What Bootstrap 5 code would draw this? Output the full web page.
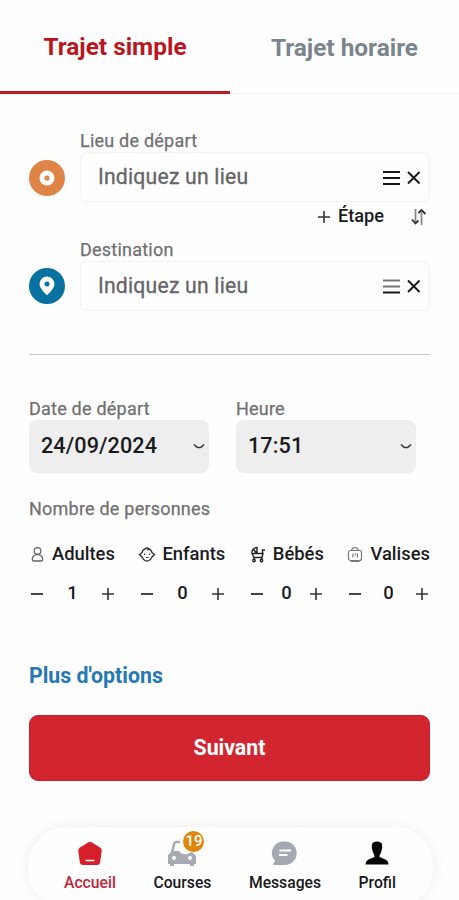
<!DOCTYPE html>
<html lang="fr">
<head>
<meta charset="utf-8">
<meta name="viewport" content="width=device-width, initial-scale=1">
<title>Réservation de trajet</title>
<link href="https://cdn.jsdelivr.net/npm/bootstrap@5.3.0/dist/css/bootstrap.min.css" rel="stylesheet">
<style>
body{font-family:Roboto,"Liberation Sans",sans-serif;font-weight:500;background:#fefefe;color:#1b1b1d;line-height:1}
.screen{width:459px;height:900px}
.tabs{height:94px}
.tab-item{border:0;background:none;font-size:24.4px;font-weight:700;padding:3px 0 0;white-space:nowrap}
.tab-on{width:230px;color:#b9161e;border-bottom:3px solid #bd1a22}
.tab-off{width:229px;color:#7b858d;border-bottom:1px solid #f3f3f4}
.content-area{padding:0 29px}
.lbl{font-size:18px;line-height:20px;color:#707072;font-weight:400;letter-spacing:.22px;-webkit-text-stroke:.25px;white-space:nowrap;margin-bottom:1px}
.place-box{height:50px;border:1px solid #f1f1f1;border-radius:7px;padding:0 7px 0 17px;font-size:21.2px;letter-spacing:.2px;color:#656567;font-weight:400;-webkit-text-stroke:.3px}
.place-row{gap:15px}
.place-from{margin-top:37px}
.place-to{margin-top:9px}
.place-from .pin{margin-bottom:2px}
.place-to .pin{margin-bottom:3px}
.step-row{height:29px;font-size:18.2px;padding-right:2px}
.rule{height:1px;background:#c9c9c9;margin-top:43px}
.pick{width:180px}
.pick-box{height:53px;background:#eee;border-radius:8px;padding:0 4px 1px 12px;font-size:21.6px;letter-spacing:.1px}
.pick-gap{gap:27px;margin-top:44px}
.people{margin-top:26px}
.kinds{font-size:18.4px;height:20px;margin-top:24px}
.kind{white-space:nowrap;gap:6px}
.kind-narrow{gap:7px}
.count{font-size:18.4px;height:20px;margin-top:19px;padding:0 2px}
.count-wide{width:83px}
.count-small{width:71px}
.count-last{width:79px}
.more{color:#2378b5;font-size:21.3px;font-weight:700;text-decoration:none;margin-top:61px;line-height:24px}
.next{height:66px;margin-top:27px;background:#d2252f;border:1px solid #c91f2a;border-radius:9px;color:#fff;font-size:21.3px;font-weight:700;padding:0}
.dock{margin:46px 26px 0 28px;height:80px;border-radius:38px;background:#fefefe;box-shadow:0 0 14px rgba(0,0,0,.07);font-size:15.7px;padding:0 37px 0 36px}
.dock-link{position:relative;color:#18181a;text-decoration:none;padding-top:12px}
.dock-link svg{height:28px;margin-bottom:8px}
.dock-on{color:#c41f35}
.count-dot{position:absolute;left:30px;top:4px;width:21px;height:21px;border-radius:50%;background:#e1860b;color:#fff;font-size:15px}
</style>
<script src="https://cdn.jsdelivr.net/npm/bootstrap@5.3.0/dist/js/bootstrap.bundle.min.js"></script>
</head>
<body>
<svg class="d-none">
  <symbol id="minus" viewBox="0 0 12 12"><path d="M0 6.500h12" stroke="#222" stroke-width="1.700"/></symbol>
  <symbol id="plus" viewBox="0 0 12 12"><path d="M0 6.500h12M6 .5v12" stroke="#333" stroke-width="1.600"/></symbol>
  <symbol id="chevron" viewBox="0 0 12 8"><path d="M1 2.500l2.500 2.300q2.500 1.500 5 0L11 2.500" fill="none" stroke="#333" stroke-width="1.500"/></symbol>
</svg>
<div class="screen d-flex flex-column overflow-hidden">
  <nav class="tabs d-flex flex-shrink-0">
    <button class="tab-item tab-on">Trajet simple</button>
    <button class="tab-item tab-off">Trajet horaire</button>
  </nav>
  <main class="content-area d-flex flex-column">
    <div class="place-row place-from d-flex align-items-end">
      <svg class="pin flex-shrink-0" width="36" height="40" viewBox="0 0 36 40"><circle cx="18" cy="18" r="18" fill="#dd8446"/><circle cx="18" cy="18" r="7.500" fill="#fff"/><circle cx="18" cy="18" r="2.600" fill="#dd8446"/></svg>
      <div class="flex-grow-1">
        <div class="lbl">Lieu de départ</div>
        <div class="place-box d-flex align-items-center"><span class="me-auto">Indiquez un lieu</span>
          <svg width="40" height="20" viewBox="0 0 40 20" fill="none" stroke="#161618" stroke-width="1.900"><path d="M1 5h17M1 11h17M1 17h17M26 5l11.500 11.500M37.500 5L26 16.500"/></svg></div>
      </div>
    </div>
    <div class="step-row d-flex align-items-center justify-content-end">
      <svg class="me-2" width="12" height="13"><use href="#plus"/></svg>
      <span>Étape</span>
      <svg class="ms-4" width="20" height="18" viewBox="0 0 20 18" fill="none" stroke-width="1.800"><path d="M7.500 1v13M13.500 4v13" stroke="#8a8a8c"/><path d="M4 11.500l3.500 4 3-3M10.500 5l3-3 4 4" stroke="#333"/></svg>
    </div>
    <div class="place-row place-to d-flex align-items-end">
      <svg class="pin flex-shrink-0" width="36" height="40" viewBox="0 0 36 40"><circle cx="18" cy="18" r="18" fill="#07719f"/><path fill="#fff" fill-rule="evenodd" d="M18 27.500c-1.500-2-7.500-7-7.500-11.500a7.500 7.500 0 0 1 15 0c0 4.500-6 9.500-7.500 11.500zM18 13.500a2.500 2.500 0 1 0 0 5 2.500 2.500 0 0 0 0-5z"/></svg>
      <div class="flex-grow-1">
        <div class="lbl">Destination</div>
        <div class="place-box d-flex align-items-center"><span class="me-auto">Indiquez un lieu</span>
          <svg width="40" height="20" viewBox="0 0 40 20" fill="none" stroke="#161618" stroke-width="1.900"><path stroke="#777" d="M1 4.500h17M1 10.500h17"/><path d="M1 16.500h17M26 4.500L37.500 16M37.500 4.500L26 16"/></svg></div>
      </div>
    </div>
    <div class="rule"></div>
    <div class="pick-gap d-flex">
      <div class="pick"><div class="lbl">Date de départ</div>
        <div class="pick-box d-flex align-items-center justify-content-between"><span>24/09/2024</span><svg width="12" height="8"><use href="#chevron"/></svg></div></div>
      <div class="pick"><div class="lbl">Heure</div>
        <div class="pick-box d-flex align-items-center justify-content-between"><span>17:51</span><svg width="12" height="8"><use href="#chevron"/></svg></div></div>
    </div>
    <div class="lbl people">Nombre de personnes</div>
    <div class="kinds d-flex justify-content-between">
      <div class="kind kind-narrow d-flex align-items-center"><svg width="16" height="18" viewBox="0 0 16 18" fill="none" stroke="#666" stroke-width="1.300"><circle cx="8.500" cy="6" r="3.300"/><path d="M6 10Q3.300 11.500 3.300 14.500q0 1.500 1.500 1.500h7.400q1.500 0 1.500-1.500 0-3-2.700-4.500-2.500-1-5 0z"/></svg>Adultes</div>
      <div class="kind d-flex align-items-center"><svg width="18" height="18" viewBox="0 0 18 18" fill="none" stroke="#333" stroke-width="1.400"><path d="M1.500 9.500l2.500-2Q5 4 9 3q4 1 5 4.500l2.500 2-2.500 2.500Q12 16 9 16t-5-4zM9 3q2 1 .5 2.500"/><path stroke-width="1.200" d="M6.500 8.500v1.500M11.500 8.500v1.500M8 12.500h2.500"/></svg>Enfants</div>
      <div class="kind d-flex align-items-center"><svg width="18" height="18" viewBox="0 0 18 18" fill="none" stroke="#222" stroke-width="1.400"><path d="M3 8.500Q2.500 3 8 2.500v6h5.500V5H16M3 8.500l2 4h8l1-4H3M8 8.500L4.500 4.500M5.500 12.500l-1 2M12.500 12.500l.5 2"/><circle cx="5" cy="15.500" r="1.200"/><circle cx="12.500" cy="15.500" r="1.200"/></svg>Bébés</div>
      <div class="kind kind-narrow d-flex align-items-center"><svg width="16" height="18" viewBox="0 0 16 18" fill="none" stroke="#777" stroke-width="1.200"><rect x="1.500" y="5.500" width="13" height="10" rx="2"/><path d="M4.500 5.500Q5 2.500 8 2.500t3.500 3M6 8.500v4M8.500 8.500v2M10.500 8.500v4M3.500 16.500h9"/></svg>Valises</div>
    </div>
    <div class="count d-flex justify-content-between">
      <div class="count-wide d-flex align-items-center justify-content-between"><svg width="12" height="13"><use href="#minus"/></svg>1<svg width="12" height="13"><use href="#plus"/></svg></div>
      <div class="count-wide d-flex align-items-center justify-content-between"><svg width="12" height="13"><use href="#minus"/></svg>0<svg width="12" height="13"><use href="#plus"/></svg></div>
      <div class="count-small d-flex align-items-center justify-content-between"><svg width="12" height="13"><use href="#minus"/></svg>0<svg width="12" height="13"><use href="#plus"/></svg></div>
      <div class="count-last d-flex align-items-center justify-content-between"><svg width="12" height="13"><use href="#minus"/></svg>0<svg width="12" height="13"><use href="#plus"/></svg></div>
    </div>
    <a class="more" href="#">Plus d'options</a>
    <button class="next">Suivant</button>
  </main>
  <footer class="dock d-flex flex-shrink-0 justify-content-between">
    <a class="dock-link dock-on d-flex flex-column align-items-center" href="#"><svg width="28" viewBox="0 0 28 28"><path fill="#d51f2a" d="M12 3.500q2-1.300 4 0l8 5q2 1.300 1.700 3.500l-1.500 11q-.4 3-3.200 3H7q-2.800 0-3.200-3L2.300 12Q2 9.800 4 8.500z"/><path stroke="#fff" stroke-width="1.500" d="M9.500 21.500h9"/></svg>Accueil</a>
    <a class="dock-link d-flex flex-column align-items-center" href="#"><svg width="30" viewBox="0 0 30 28"><path fill="none" stroke="#a7aab2" stroke-width="2.500" d="M5 14l2-9q.5-2 3-2H13"/><path fill="#a7aab2" fill-rule="evenodd" d="M1 16l4-4h7q3 4 8 3l5-2 4 4v8h-2v2h-4v-2H7v2H3v-2H1zM7 17a2 2 0 1 0 0 4 2 2 0 0 0 0-4zm16 0a2 2 0 1 0 0 4 2 2 0 0 0 0-4z"/></svg>Courses<span class="count-dot d-flex align-items-center justify-content-center">19</span></a>
    <a class="dock-link d-flex flex-column align-items-center" href="#"><svg width="28" viewBox="0 0 28 28"><path fill="#a4a8b1" d="M14 2.500a11.700 11.700 0 1 1 0 23.400H3q-1.500 0-.5-1.500l1.500-2.400A11.700 11.700 0 0 1 14 2.500z"/><path stroke="#fff" stroke-width="1.800" d="M8.500 11.500h11.500M8 16h8.500"/></svg>Messages</a>
    <a class="dock-link d-flex flex-column align-items-center" href="#"><svg width="28" viewBox="0 0 28 28"><path fill="#050505" d="M9 5q1-2.500 5-2.500T19 5q1 4-1 8.500-1.500 2-1.500 4.500l6 2.500q3 1.500 3 5h-23q0-3.500 3-5l6-2.500q0-2.500-1.500-4.500-2-4.500-1-8.500z"/></svg>Profil</a>
  </footer>
</div>
</body>
</html>
